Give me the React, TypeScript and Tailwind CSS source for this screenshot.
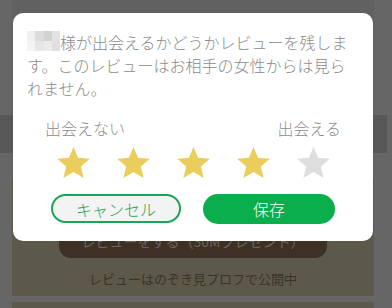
import React from 'react';

const FONT = { fontFamily: '"Noto Sans CJK JP", "Noto Sans", sans-serif' };

const Star = ({ filled }: { filled: boolean }) => (
  <svg width="33" height="31" viewBox="2 2 20 19" aria-hidden="true">
    <path
      d="M12 17.27L18.18 21l-1.64-7.03L22 9.24l-7.19-.61L12 2 9.19 8.63 2 9.24l5.46 4.73L5.82 21z"
      fill={filled ? '#ebcd5d' : '#dedede'}
    />
  </svg>
);

/** blurred user name placeholder */
const BlurredName = () => (
  <span className="inline-grid grid-cols-4 w-[33px] h-[20px] align-top">
    <span className="bg-[#f0f0f0]" />
    <span className="bg-[#dcdcdc]" />
    <span className="bg-[#d2d2d2]" />
    <span className="bg-[#e2e2e2]" />
    <span className="bg-[#f4f4f4]" />
    <span className="bg-[#e6e6e6]" />
    <span className="bg-[#ececec]" />
    <span className="bg-[#e0e0e0]" />
  </span>
);

const ReviewModal = () => {
  const rating = 4;
  return (
    <div className="absolute left-[13px] top-[13px] w-[360px] bg-white rounded-[10px] pt-[18px] pb-[17px] font-light">
      <p className="px-[14px] text-[16px] leading-[23px] text-[#8c8c8c]">
        <BlurredName />
        様が出会えるかどうかレビューを残します。このレビューはお相手の女性からは見られません。
      </p>
      <div className="mt-[18px] flex justify-between px-[32px] text-[16px] leading-[20px] text-[#8c8c8c]">
        <span>出会えない</span>
        <span>出会える</span>
      </div>
      <div className="mt-[9px] flex justify-center gap-[27px]">
        {[1, 2, 3, 4, 5].map((n) => (
          <Star key={n} filled={n <= rating} />
        ))}
      </div>
      <div className="mt-[16px] flex justify-center gap-[22px]">
        <button className="w-[130px] h-[29px] rounded-full border-2 border-[#1ea458] bg-[#f3f3f3] text-[16px] leading-none text-[#2a9f55]">
          キャンセル
        </button>
        <button className="w-[132px] h-[30px] rounded-full bg-[#0bae4d] text-[16px] leading-none text-white">
          保存
        </button>
      </div>
    </div>
  );
};

export default function App() {
  return (
    <div className="relative w-[392px] h-[308px] overflow-hidden bg-[#666666]" style={FONT}>
      <div className="h-[115px] ml-[12px] w-[362px] bg-[#616161]" />
      <div className="h-[38px] mr-[5px] bg-[#575757]" />
      <div className="h-[27px] ml-[12px] w-[362px] bg-[#616161]" />
      <div className="h-[116px] ml-[12px] w-[362px] bg-[#5c594a] flex flex-col items-center">
        <div className="mt-[44px] w-[268px] h-[34px] rounded-[12px] bg-[#3c3124] flex items-center justify-center text-[14px] text-[#6d6558]">
          レビューをする（30Mプレゼント）
        </div>
        <p className="mt-[12px] text-[13px] leading-[18px] text-[#3a3328]">
          レビューはのぞき見プロフで公開中
        </p>
      </div>
      <div className="h-[6px]" />
      <div className="h-[6px] ml-[12px] w-[362px] bg-[#5c594a]" />
      <ReviewModal />
    </div>
  );
}
